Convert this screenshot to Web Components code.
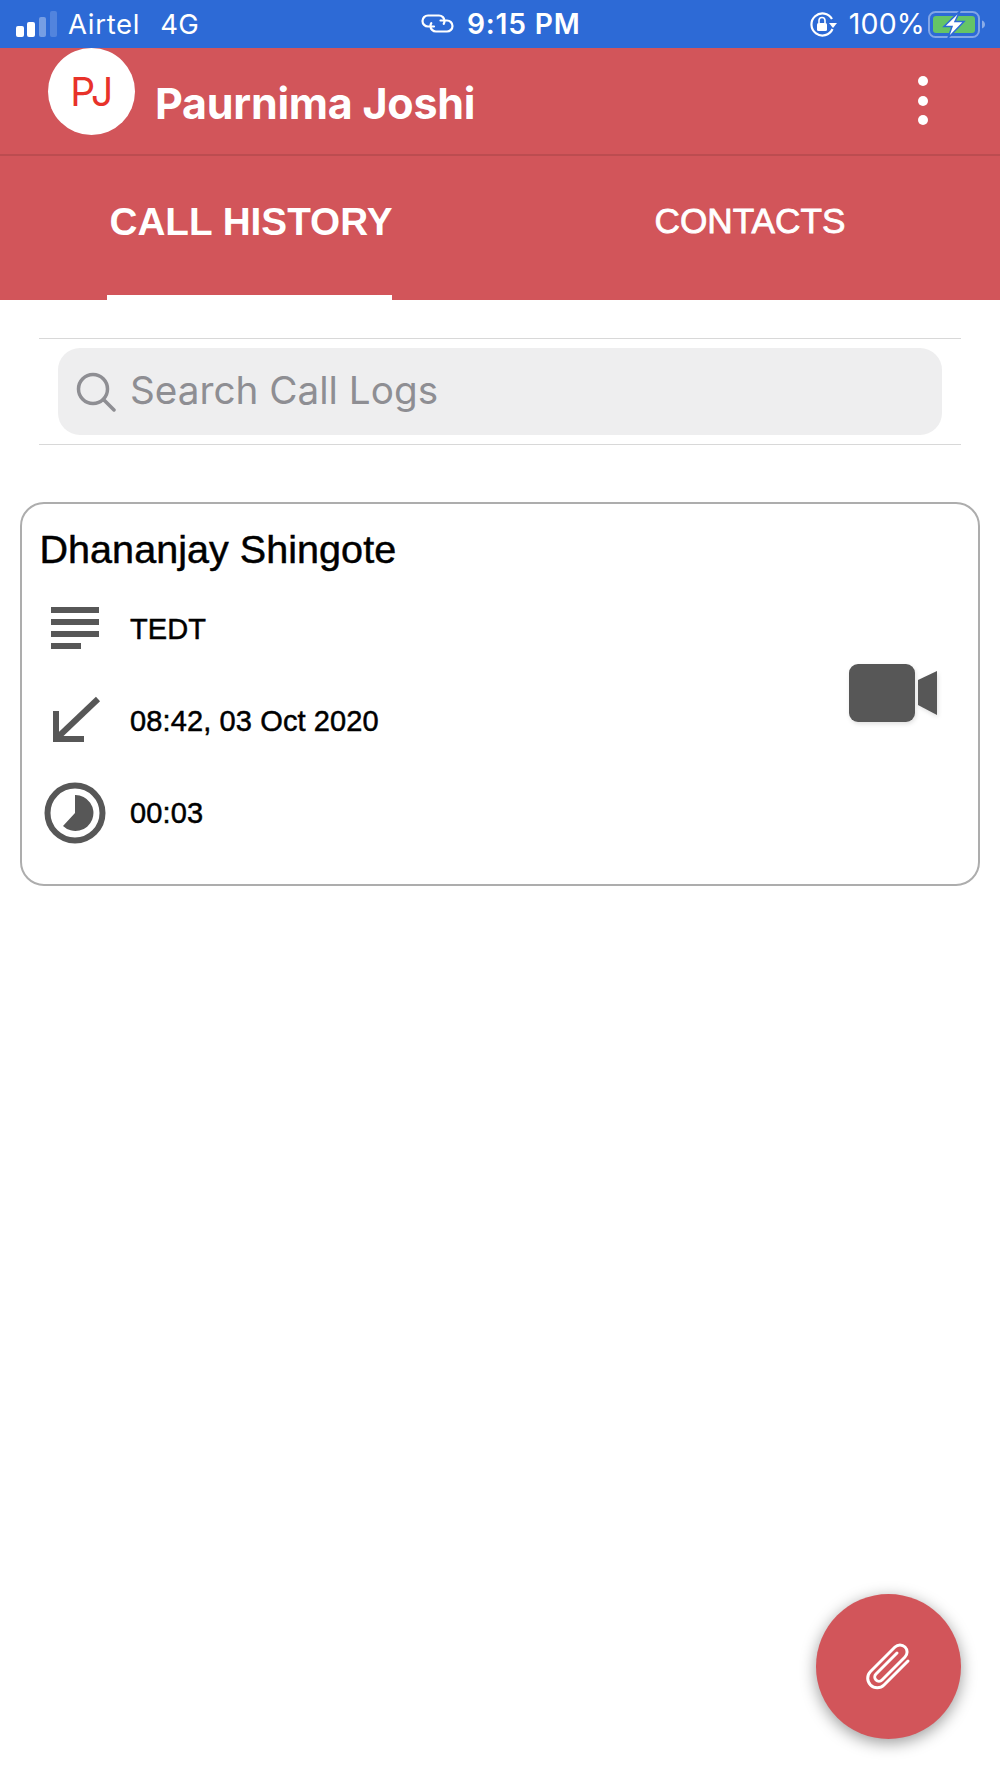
<!DOCTYPE html>
<html><head><meta charset="utf-8"><title>Call History</title>
<style>
html,body{margin:0;padding:0;background:#fff}
body{width:1000px;height:1778px;overflow:hidden;font-family:"Liberation Sans",sans-serif}
app-shell{display:block}
</style></head><body>
<app-shell>
  <status-bar></status-bar>
  <app-header name="Paurnima Joshi" initials="PJ"></app-header>
  <app-tabs></app-tabs>
  <search-bar placeholder="Search Call Logs"></search-bar>
  <call-card name="Dhananjay Shingote">
    <call-row icon="note">TEDT</call-row>
    <call-row icon="in">08:42, 03 Oct 2020</call-row>
    <call-row icon="clock">00:03</call-row>
  </call-card>
  <fab-button></fab-button>
</app-shell>
<script>
function def(tag, html){
  customElements.define(tag, class extends HTMLElement{
    connectedCallback(){
      if(this.shadowRoot) return;
      const r=this.attachShadow({mode:'open'});
      r.innerHTML = typeof html==='function' ? html(this) : html;
    }
  });
}
def('app-shell',`<style>:host{display:block;position:relative;width:1000px;height:1778px}</style><slot></slot>`);
def('status-bar',`<style>
:host{display:flex;align-items:center;height:48px;background:#2d6ad6;color:#fff;font:400 27.500px/48px Inter,sans-serif;box-sizing:border-box;padding:0 14px 0 16px}
svg{display:block;flex:none}
.car{margin-left:11px;letter-spacing:.7px}
.net{margin-left:20px;letter-spacing:.4px}
.mid{display:flex;align-items:center;position:absolute;left:421px;top:0;height:48px}
.time{margin-left:13px;font-weight:600;font-size:28.200px;letter-spacing:.8px}
.right{display:flex;align-items:center;margin-left:auto}
.pct{margin-left:12px;font-size:28.500px;letter-spacing:.2px}
</style>
<svg width="41" height="27" viewBox="0 0 41 27"><rect y="15" width="8" height="11" rx="2" fill="#fff"/><rect x="11" y="11" width="8" height="15" rx="2" fill="#fff"/><rect x="23" y="6" width="7" height="20" rx="2" fill="#fff" fill-opacity=".35"/><rect x="34" y="0" width="7" height="26" rx="2" fill="#fff" fill-opacity=".18"/></svg>
<span class="car">Airtel</span><span class="net">4G</span>
<span class="mid">
<svg width="33" height="20" viewBox="0 0 33 20" fill="none" stroke="#fff" stroke-width="2.200" stroke-linecap="round"><path d="M13 12.500H7A5.500 5.500 0 0 1 7 1.500h11a5.500 5.500 0 0 1 5.500 5.500c0 1-.3 2-.8 2.800"/><path d="M19.500 6.500H26a5.500 5.500 0 0 1 0 11H15a5.500 5.500 0 0 1-5.500-5.500c0-1 .3-2 .8-2.800"/></svg>
<span class="time">9:15 PM</span></span>
<span class="right">
<svg width="27" height="26" viewBox="0 0 27 26" fill="none"><path d="M22.500 18A11 11 0 1 1 22 8" stroke="#fff" stroke-width="2.200"/><path d="M19 12h8l-4 5z" fill="#fff"/><rect x="7" y="12" width="10" height="8" rx="1.500" fill="#fff"/><path d="M9 12V9.500a3 3 0 0 1 6 0V12" stroke="#fff" stroke-width="1.600"/></svg>
<span class="pct">100%</span>
<svg style="margin-left:3px" width="58" height="27" viewBox="0 0 58 27"><rect x="1" y="1" width="50" height="25" rx="6.500" fill="none" stroke="#fff" stroke-opacity=".4" stroke-width="2"/><rect x="5" y="5" width="42" height="17" rx="3" fill="#65c466"/><path d="M54 9.500c1.800.6 3 2.200 3 4s-1.200 3.400-3 4z" fill="#fff" fill-opacity=".45"/><path d="M32 0 16 15.500h8L20 27l16-16.500h-9z" fill="#fff" stroke="#2d6ad6" stroke-width="1.500"/></svg>
</span>`);
def('app-header',h=>`<style>
:host{display:flex;align-items:flex-start;height:108px;box-sizing:border-box;background:#d2555a;border-bottom:2px solid #bc4c50;padding-left:48px;color:#fff}
.av{width:87px;height:87px;border-radius:50%;background:#fff;color:#e8322a;font:400 39px/87px Inter,sans-serif;text-align:center;flex:none;letter-spacing:-.5px}
.name{font:700 43px/46px Inter,sans-serif;margin:32px 0 0 20px;letter-spacing:-.25px}
.dots{margin:28px 72px 0 auto;display:flex;flex-direction:column;gap:9.500px}
.dots i{display:block;width:10px;height:10px;border-radius:50%;background:#fff}
</style><span class="av">${h.getAttribute('initials')}</span><span class="name">${h.getAttribute('name')}</span><span class="dots"><i></i><i></i><i></i></span>`);
def('app-tabs',`<style>
:host{display:flex;height:144px;background:#d2555a;color:#fff}
.t{flex:1;display:flex;flex-direction:column;align-items:center}
.l{flex:1;display:flex;align-items:center;padding:0 0 6px 2px;font:700 38.700px/44px "Liberation Sans",sans-serif}
.c{font-weight:400;-webkit-text-stroke:.8px #fff;font-size:35.200px;padding:0 0 8px}
.b{width:285px;height:5px;background:#fff;margin:0 1px .5px 0}
.n{height:5.500px}
</style><div class="t"><span class="l">CALL HISTORY</span><span class="b"></span></div><div class="t"><span class="l c">CONTACTS</span><span class="n"></span></div>`);
def('search-bar',h=>`<style>
:host{display:block;margin:38px 39px 0;border-top:1.500px solid #d8d8d8;border-bottom:1.500px solid #d8d8d8;padding:9px 19px}
.f{display:flex;align-items:center;height:87px;background:#eeeeef;border-radius:22px;padding-left:18px;color:#8e8e93;font:400 38.700px/46px Inter,sans-serif}
.f span{margin-top:-3px}
svg{flex:none;margin-right:14px}
</style><div class="f"><svg width="40" height="40" viewBox="0 0 40 40" fill="none" stroke="#8e8e93" stroke-width="3.500" stroke-linecap="round"><circle cx="17" cy="17" r="14.500"/><path d="M28 28l10 10"/></svg><span>${h.getAttribute('placeholder')}</span></div>`);
def('call-card',h=>`<style>
:host{display:flex;margin:57px 20px 0;height:384px;box-sizing:border-box;border:2.500px solid #adadad;border-radius:24px;padding:0 0 0 17.500px;color:#000}
.m{flex:1;min-width:0}
.n{font:400 39.500px/44px "Liberation Sans",sans-serif;margin:22.500px 0 12px 0;letter-spacing:.05px;-webkit-text-stroke:.5px #000}
svg{flex:none;margin:159.500px 39.500px 0 0;filter:drop-shadow(1px 2px 2px rgba(0,0,0,.12))}
</style><div class="m"><div class="n">${h.getAttribute('name')}</div><slot></slot></div>
<svg width="90" height="58" viewBox="0 0 90 58" fill="#575757"><rect width="66" height="58" rx="9"/><path d="M69 16 88 7v44L69 41z"/></svg>`);
const ICONS={
 note:`<svg width="72" height="44" viewBox="0 0 72 44" fill="#575757"><rect x="13" width="48" height="6"/><rect x="13" y="12" width="48" height="6"/><rect x="13" y="24" width="48" height="6"/><rect x="13" y="36" width="30" height="6"/></svg>`,
 in:`<svg width="72" height="50" viewBox="0 0 72 50" fill="none" stroke="#575757" stroke-width="6"><path d="M60 3 20 41"/><path d="M18 15v28h28" stroke-linejoin="miter"/></svg>`,
 clock:`<svg width="72" height="62" viewBox="0 0 72 62"><circle cx="37" cy="31" r="27.500" fill="none" stroke="#575757" stroke-width="6"/><path d="M37 31V13a18 18 0 1 1-12 31z" fill="#575757"/></svg>`
};
customElements.define('call-row',class extends HTMLElement{
  connectedCallback(){
    if(this.shadowRoot) return;
    this.attachShadow({mode:'open'}).innerHTML=`<style>
:host{display:flex;align-items:center;height:92px;font:400 29px/34px "Liberation Sans",sans-serif;letter-spacing:.12px;-webkit-text-stroke:.5px #000}
.i{width:72px;margin:0 20.500px 0 -2px;display:flex;justify-content:center;flex:none}
svg{display:block}
</style><span class="i">${ICONS[this.getAttribute('icon')]}</span><slot></slot>`;
  }
});
def('fab-button',`<style>
:host{position:absolute;left:816px;top:1594px;width:145px;height:145px;border-radius:50%;background:#d2555a;box-shadow:0 4px 16px rgba(0,0,0,.4);display:flex;align-items:center;justify-content:center}
</style><svg width="50" height="50" viewBox="0 0 50 50" fill="none" stroke="#fff" stroke-width="3" stroke-linecap="round" stroke-linejoin="round"><path d="M44 19 20 43a9.500 9.500 0 0 1-13.500-13.500L31 5a7 7 0 0 1 10 10L18 38a4 4 0 0 1-6-6L33 11"/></svg>`);
</script>
</body></html>
